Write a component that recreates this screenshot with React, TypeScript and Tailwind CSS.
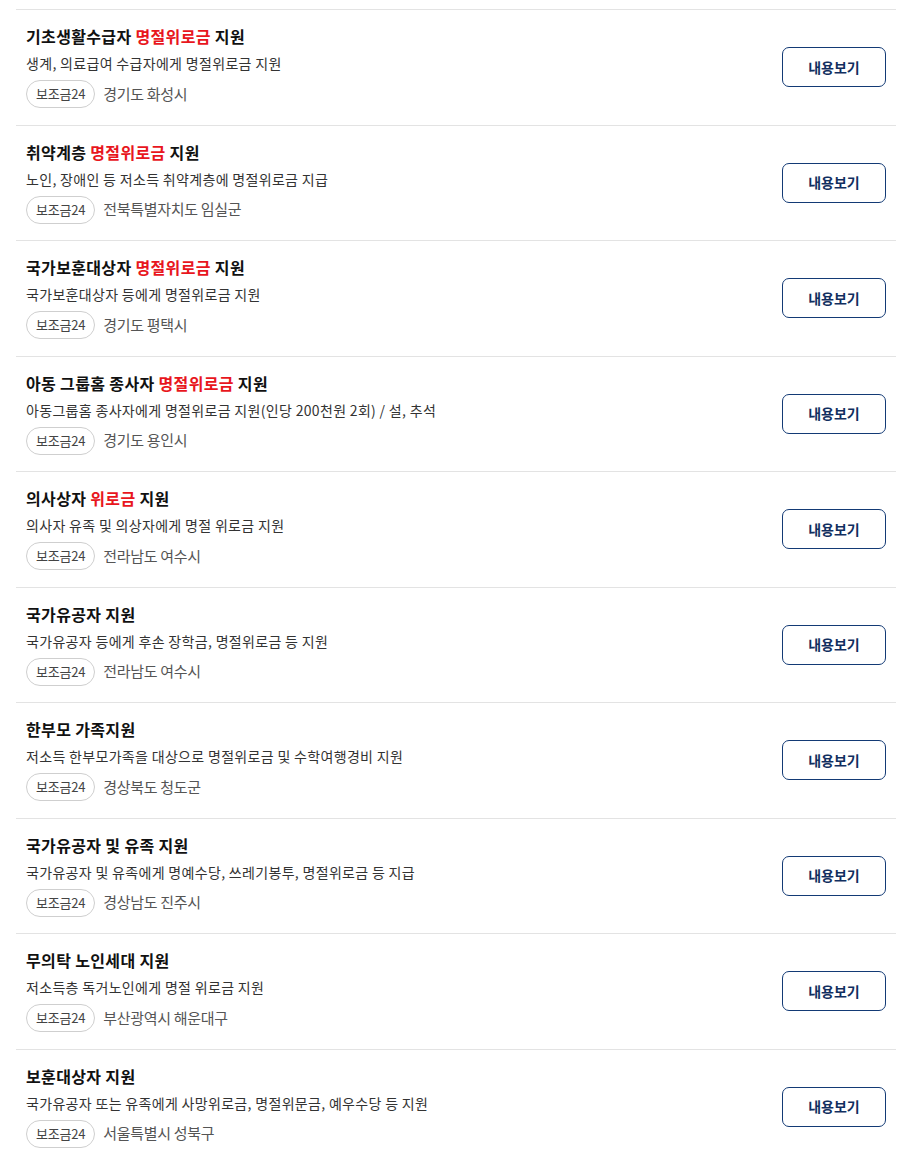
import React from "react";

type Item = { pre: string; red?: string; post?: string; desc: string; loc: string };

const items: Item[] = [
  { pre: "기초생활수급자 ", red: "명절위로금", post: " 지원", desc: "생계, 의료급여 수급자에게 명절위로금 지원", loc: "경기도 화성시" },
  { pre: "취약계층 ", red: "명절위로금", post: " 지원", desc: "노인, 장애인 등 저소득 취약계층에 명절위로금 지급", loc: "전북특별자치도 임실군" },
  { pre: "국가보훈대상자 ", red: "명절위로금", post: " 지원", desc: "국가보훈대상자 등에게 명절위로금 지원", loc: "경기도 평택시" },
  { pre: "아동 그룹홈 종사자 ", red: "명절위로금", post: " 지원", desc: "아동그룹홈 종사자에게 명절위로금 지원(인당 200천원 2회) / 설, 추석", loc: "경기도 용인시" },
  { pre: "의사상자 ", red: "위로금", post: " 지원", desc: "의사자 유족 및 의상자에게 명절 위로금 지원", loc: "전라남도 여수시" },
  { pre: "국가유공자 지원", desc: "국가유공자 등에게 후손 장학금, 명절위로금 등 지원", loc: "전라남도 여수시" },
  { pre: "한부모 가족지원", desc: "저소득 한부모가족을 대상으로 명절위로금 및 수학여행경비 지원", loc: "경상북도 청도군" },
  { pre: "국가유공자 및 유족 지원", desc: "국가유공자 및 유족에게 명예수당, 쓰레기봉투, 명절위로금 등 지급", loc: "경상남도 진주시" },
  { pre: "무의탁 노인세대 지원", desc: "저소득층 독거노인에게 명절 위로금 지원", loc: "부산광역시 해운대구" },
  { pre: "보훈대상자 지원", desc: "국가유공자 또는 유족에게 사망위로금, 명절위문금, 예우수당 등 지원", loc: "서울특별시 성북구" },
];

export default function App() {
  return (
    <div
      className="bg-white pt-[9px] px-4 w-[917px] h-[1163px] overflow-hidden"
      style={{ fontFamily: '"Noto Sans CJK KR", "Noto Sans", sans-serif' }}
    >
      <ul className="w-[880px]">
        {items.map((it, i) => (
          <li
            key={i}
            className="flex items-center justify-between border-t border-[#e3e3e3] pl-[10px] pr-[10px] pt-[14px] pb-[16.5px]"
          >
            <div className="flex flex-col">
              <div className="text-[16px] leading-[24px] font-bold text-[#111] tracking-[0.35px]">
                {it.pre}
                {it.red && <span className="text-[#e8161d]">{it.red}</span>}
                {it.post}
              </div>
              <div className="mt-[4px] text-[14px] leading-[22px] text-[#333] tracking-[0.32px]">{it.desc}</div>
              <div className="mt-[6px] flex items-center gap-[8px]">
                <span className="h-[28px] px-[9px] flex items-center rounded-full border border-[#cfcfcf] text-[13px] text-[#444] tracking-[-0.2px]">
                  보조금24
                </span>
                <span className="text-[15px] text-[#555] tracking-[-0.3px]">{it.loc}</span>
              </div>
            </div>
            <button className="mt-[2px] w-[104px] h-[40px] rounded-[7px] border border-[#133a75] bg-white text-[14px] font-bold text-[#112f60] tracking-[0px]">
              내용보기
            </button>
          </li>
        ))}
      </ul>
    </div>
  );
}
